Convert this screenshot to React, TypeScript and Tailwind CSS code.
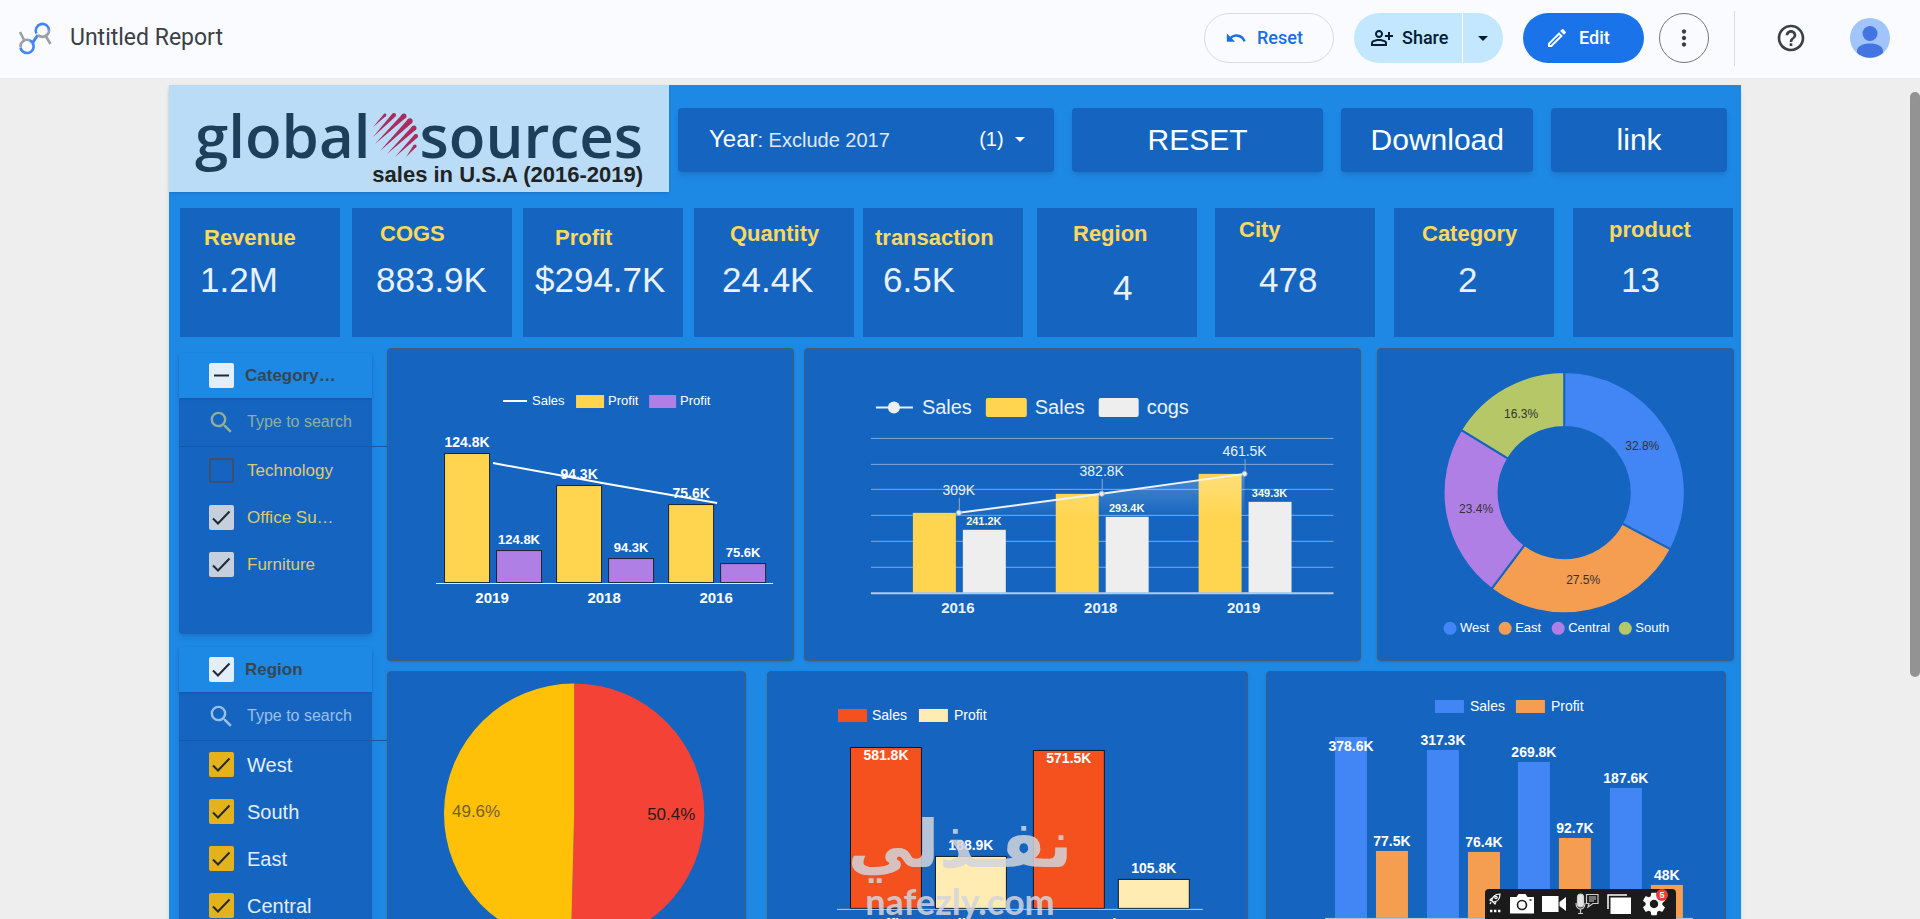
import { useState } from "react";
import type { ReactNode } from "react";
import {
  MdArrowDropDown,
  MdHelpOutline,
  MdMoreVert,
  MdOutlineModeEdit,
  MdOutlinePersonAddAlt,
  MdPhotoCamera,
  MdSearch,
  MdSettings,
  MdUndo,
  MdVideocam,
} from "react-icons/md";

const INK = "#1565c0";

/* ---------- top bar ---------- */

function ReportMark() {
  return (
    <svg viewBox="0 0 34 34" className="h-[34px] w-[34px]" fill="none" strokeWidth="2.6" aria-hidden="true">
      <path d="M2 11l4 8M28 15.500l4.500 7.500" stroke="#9aa0a6" />
      <path d="M14.800 21.500l5-7.500" stroke="#4285f4" strokeWidth="3" />
      <path d="M18.500 12.500a6.600 6.600 0 1 1 12.500-3" stroke="#4285f4" />
      <path d="M31 8.500a6.600 6.600 0 0 1-11 5.500" stroke="#9aa0a6" />
      <path d="M2.500 26a6.600 6.600 0 0 1 9.500-6.500" stroke="#9aa0a6" />
      <path d="M12 19.500a6.600 6.600 0 1 1-9.500 7" stroke="#4285f4" />
    </svg>
  );
}

function Avatar() {
  return (
    <svg viewBox="0 0 40 40" className="h-10 w-10" aria-hidden="true">
      <clipPath id="avatar-clip">
        <circle cx="20" cy="20" r="20" />
      </clipPath>
      <g clipPath="url(#avatar-clip)">
        <rect width="40" height="40" fill="#a1c5fb" />
        <circle cx="20" cy="15.500" r="7.500" fill="#4374e0" />
        <path d="M7 33c0-5 6-7.500 13-7.500S33 28 33 33v2a20 20 0 0 1-26 0z" fill="#4374e0" />
      </g>
    </svg>
  );
}

function TopBar() {
  return (
    <header className="flex h-[79px] shrink-0 items-start justify-between border-b border-[#e8eaed] bg-[#f9fbff] pr-[30px] pl-[18px] font-[Roboto,sans-serif]">
      <div className="flex h-[76px] items-center gap-[18px]">
        <ReportMark />
        <h1 className="text-[23px] leading-7 text-[#3c4043]">Untitled Report</h1>
      </div>
      <div className="flex h-[76px] items-center text-lg font-medium">
        <button className="flex h-[50px] w-[130px] items-center gap-2.5 rounded-full border border-[#dadce0] pl-5 text-[#1a6fe0]">
          <MdUndo size={22} />
          Reset
        </button>
        <div className="ml-5 flex h-[50px] w-[149px] overflow-hidden rounded-full bg-[#c2e7ff] text-[#001d35]">
          <button className="flex flex-1 items-center gap-2 border-r border-white pl-4">
            <MdOutlinePersonAddAlt size={24} />
            Share
          </button>
          <button aria-label="More sharing options" className="flex w-10 items-center justify-center">
            <MdArrowDropDown size={24} />
          </button>
        </div>
        <button className="ml-5 flex h-[50px] w-[121px] items-center gap-2.5 rounded-full bg-[#1a73e8] pl-[22px] text-white">
          <MdOutlineModeEdit size={24} />
          Edit
        </button>
        <button
          aria-label="More options"
          className="ml-[15px] flex h-[50px] w-[50px] items-center justify-center rounded-full border border-[#747775] text-[#3c4043]"
        >
          <MdMoreVert size={26} />
        </button>
        <span className="ml-[25px] h-[55px] w-px bg-[#dadce0]" />
        <button aria-label="Help" className="ml-10 text-[#3c4043]">
          <MdHelpOutline size={32} />
        </button>
        <button aria-label="Account" className="ml-[43px]">
          <Avatar />
        </button>
      </div>
    </header>
  );
}

/* ---------- brand banner and controls ---------- */

const GLOBE_STRIPES = [
  [12, 3, 0, 15, 1.4],
  [21, 3, 0, 25, 2.1],
  [31, 4, 2, 32, 2.5],
  [37, 9, 7, 39, 2.7],
  [41, 16, 14, 42, 2.5],
  [43, 24, 22, 45, 2.1],
  [42, 34, 33, 45, 1.6],
];

function Globe() {
  return (
    <svg viewBox="-2 -1 48 48" className="-mx-1 h-12 w-12" fill="#ac2a5c" aria-hidden="true">
      {GLOBE_STRIPES.map(([x, y, tx, ty, r]) => {
        const len = Math.hypot(tx - x, ty - y);
        const nx = (-(ty - y) / len) * r;
        const ny = ((tx - x) / len) * r;
        return (
          <g key={x + "-" + y}>
            <circle cx={x} cy={y} r={r} />
            <path d={`M${x + nx} ${y + ny}L${tx} ${ty}L${x - nx} ${y - ny}z`} />
          </g>
        );
      })}
    </svg>
  );
}

function Banner() {
  return (
    <div className="h-[107px] w-[500px] shrink-0 bg-[#bbdcf6] pt-[22px] pr-[26px] pl-[26px] shadow">
      <div className="flex items-center justify-between font-['Open_Sans',sans-serif] text-[60px] leading-[56px] font-semibold text-[#1d3f5c]">
        <span>global</span>
        <Globe />
        <span>sources</span>
      </div>
      <p className="text-right text-[22px] leading-6 font-bold text-[#1f2326]">sales in U.S.A (2016-2019)</p>
    </div>
  );
}

function ControlButton({ children }: { children: ReactNode }) {
  return (
    <button className="flex h-16 items-center justify-center rounded bg-[#1565c0] pb-0.5 text-[30px] text-white shadow-md">
      {children}
    </button>
  );
}

function Controls() {
  return (
    <div className="grid flex-1 grid-cols-[376fr_252fr_192fr_176fr] gap-[18px] pt-[23px] pr-[14px] pl-[9px]">
      <button className="flex h-16 items-center justify-between rounded bg-[#1565c0] pr-[22px] pb-0.5 pl-[31px] text-xl text-[#dfe9f5] shadow-md">
        <span>
          <span className="text-2xl text-white">Year</span>: Exclude 2017
        </span>
        <span className="flex items-center gap-1 text-white">
          (1)
          <MdArrowDropDown size={24} />
        </span>
      </button>
      <ControlButton>RESET</ControlButton>
      <ControlButton>Download</ControlButton>
      <ControlButton>link</ControlButton>
    </div>
  );
}

/* ---------- scorecards ---------- */

const SCORECARDS = [
  { title: "Revenue", value: "1.2M", titleClass: "pl-6 pt-4", valueClass: "pl-5" },
  { title: "COGS", value: "883.9K", titleClass: "pl-7 pt-3", valueClass: "pl-6" },
  { title: "Profit", value: "$294.7K", titleClass: "pl-8 pt-4", valueClass: "pl-3" },
  { title: "Quantity", value: "24.4K", titleClass: "pl-9 pt-3", valueClass: "pl-7" },
  { title: "transaction", value: "6.5K", titleClass: "pl-3 pt-4", valueClass: "pl-5" },
  { title: "Region", value: "4", titleClass: "pl-9 pt-3", valueClass: "pl-[76px] pt-2" },
  { title: "City", value: "478", titleClass: "pl-6 pt-2", valueClass: "pl-11" },
  { title: "Category", value: "2", titleClass: "pl-7 pt-3", valueClass: "pl-16" },
  { title: "product", value: "13", titleClass: "pl-9 pt-2", valueClass: "pl-12" },
];

function Scorecards() {
  return (
    <div className="mt-4 grid grid-cols-[172fr_171fr_171fr_169fr_174fr_178fr_179fr_179fr_160fr] pr-2 pl-[11px]">
      {SCORECARDS.map((card) => (
        <section key={card.title} className="h-[129px] w-40 bg-[#1565c0]">
          <h2 className={"h-[52px] text-[22px] leading-[27px] font-bold text-[#fdd85d] " + card.titleClass}>{card.title}</h2>
          <p className={"text-[35px] leading-10 text-[#e8f1fc] " + card.valueClass}>{card.value}</p>
        </section>
      ))}
    </div>
  );
}

/* ---------- filter lists ---------- */

type BoxTone = "head" | "silver" | "gold";

const BOX_TONES: Record<BoxTone, string> = {
  head: "bg-[#e3eef8]",
  silver: "bg-[#c5cfde]",
  gold: "bg-[#e4b31c]",
};

function Tick({
  label,
  tone,
  state,
  labelClass,
}: {
  label: string;
  tone: BoxTone;
  state: "on" | "off" | "mixed";
  labelClass: string;
}) {
  const [mark, setMark] = useState(state);
  return (
    <label className={"flex items-center " + labelClass}>
      <span className="relative block h-[25px] w-[25px] shrink-0">
        <input
          type="checkbox"
          checked={mark !== "off"}
          onChange={() => setMark(mark === "off" ? "on" : "off")}
          className={
            "block h-[25px] w-[25px] appearance-none rounded-xs " +
            (mark === "off" ? "border-2 border-[#3f5068]" : BOX_TONES[tone])
          }
        />
        {mark !== "off" && (
          <svg viewBox="0 0 25 25" className="pointer-events-none absolute inset-0" fill="none" stroke="#1f2a33" strokeWidth="2">
            <path d={mark === "on" ? "M4 13.500l5 5L20.500 6.500" : "M5 12.500h15"} />
          </svg>
        )}
      </span>
      {label}
    </label>
  );
}

function FilterList({
  title,
  titleState,
  items,
  tone,
  searchClass,
  itemClass,
  panelClass,
}: {
  title: string;
  titleState: "on" | "mixed";
  items: { label: string; state: "on" | "off" }[];
  tone: BoxTone;
  searchClass: string;
  itemClass: string;
  panelClass: string;
}) {
  return (
    <section className={"rounded bg-[#1565c0] shadow-md " + panelClass}>
      <div className="h-[45px] bg-[#1e88e5] shadow-sm">
        <Tick label={title} tone="head" state={titleState} labelClass="h-[45px] gap-[11px] pl-[30px] text-[17px] font-bold text-[#37474f]" />
      </div>
      <div className={"-mr-[15px] flex h-[49px] items-center gap-[11px] border-b border-[#1558a8] pl-7 " + searchClass}>
        <MdSearch size={29} className="shrink-0" />
        <input
          type="text"
          aria-label={"Search " + title}
          placeholder="Type to search"
          className="w-28 min-w-0 bg-transparent text-base outline-none placeholder:text-current placeholder:opacity-100"
        />
      </div>
      <ul>
        {items.map((item) => (
          <li key={item.label}>
            <Tick label={item.label} tone={tone} state={item.state} labelClass={"h-[47px] gap-[13px] pl-[30px] " + itemClass} />
          </li>
        ))}
      </ul>
    </section>
  );
}

/* ---------- chart helpers ---------- */

type Align = "start" | "middle";

function T({
  x,
  y,
  size,
  bold,
  fill = "#ffffff",
  align = "middle",
  children,
}: {
  x: number;
  y: number;
  size: number;
  bold?: boolean;
  fill?: string;
  align?: Align;
  children: string;
}) {
  return (
    <text x={x} y={y} fontSize={size} fontWeight={bold ? 700 : 400} fill={fill} textAnchor={align}>
      {children}
    </text>
  );
}

function ChartCard({ title, box, className, children }: { title: string; box: string; className: string; children: ReactNode }) {
  return (
    <figure className={"rounded border border-[#3f5d7c] bg-[#1565c0] shadow-sm " + className}>
      <svg viewBox={box} className="block w-full" role="img" aria-label={title}>
        {children}
      </svg>
    </figure>
  );
}

function slice(cx: number, cy: number, r: number, inner: number, from: number, to: number) {
  const point = (radius: number, share: number) => {
    const a = share * 2 * Math.PI;
    return `${(cx + radius * Math.sin(a)).toFixed(2)} ${(cy - radius * Math.cos(a)).toFixed(2)}`;
  };
  const large = to - from > 0.5 ? 1 : 0;
  return `M${point(r, from)}A${r} ${r} 0 ${large} 1 ${point(r, to)}L${point(inner, to)}A${inner} ${inner} 0 ${large} 0 ${point(inner, from)}z`;
}

/* ---------- charts (all share the canvas coordinate space) ---------- */

const PROFIT_BY_YEAR = [
  { year: "2019", label: "124.8K", x: 444, top: 453, labelY: 447, smallTop: 550, smallY: 544 },
  { year: "2018", label: "94.3K", x: 556, top: 485, labelY: 479, smallTop: 558, smallY: 552 },
  { year: "2016", label: "75.6K", x: 668, top: 504, labelY: 498, smallTop: 563, smallY: 557 },
];

function ProfitByYear() {
  return (
    <ChartCard title="Profit by year" box="388 349 405 311" className="flex-[407]">
      <path d="M503 401h24" stroke="#fff" strokeWidth="2" />
      <T x={532} y={405} size={13} align="start">Sales</T>
      <rect x="576" y="395" width="28" height="13" fill="#ffd54f" />
      <T x={608} y={405} size={13} align="start">Profit</T>
      <rect x="649" y="395" width="27" height="13" fill="#af7fe6" />
      <T x={680} y={405} size={13} align="start">Profit</T>
      {PROFIT_BY_YEAR.map((d) => (
        <g key={d.year}>
          <rect x={d.x + 0.5} y={d.top + 0.5} width="45" height={582 - d.top} fill="#ffd54f" stroke="#1b2430" />
          <rect x={d.x + 52.5} y={d.smallTop + 0.5} width="45" height={582 - d.smallTop} fill="#af7fe6" stroke="#1b2430" />
          <T x={d.x + 23} y={d.labelY} size={14} bold>{d.label}</T>
          <T x={d.x + 75} y={d.smallY} size={13} bold>{d.label}</T>
          <T x={d.x + 48} y={603} size={15} bold>{d.year}</T>
        </g>
      ))}
      <path d="M436 583.500h337" stroke="#dbe7f5" />
      <path d="M493 463l112 20.500L717 503" stroke="#fff" strokeWidth="2" fill="none" />
    </ChartCard>
  );
}

const SALES_COGS = [
  { year: "2016", sales: "309K", cogs: "241.2K", x: 913, top: 513, labelY: 495, cogsTop: 530, cogsY: 525 },
  { year: "2018", sales: "382.8K", cogs: "293.4K", x: 1056, top: 494, labelY: 476, cogsTop: 517, cogsY: 512 },
  { year: "2019", sales: "461.5K", cogs: "349.3K", x: 1199, top: 474, labelY: 456, cogsTop: 502, cogsY: 497 },
];

function SalesAndCogs() {
  return (
    <ChartCard title="Sales and cogs by year" box="805 349 555 311" className="ml-2.5 flex-[557]">
      <defs>
        <linearGradient id="area-fade" gradientUnits="userSpaceOnUse" x1="0" y1="473" x2="0" y2="518">
          <stop offset="0" stopColor="#fff" stopOpacity="0.25" />
          <stop offset="1" stopColor="#fff" stopOpacity="0" />
        </linearGradient>
      </defs>
      <path d="M876 407.500h37" stroke="#eee" strokeWidth="2" />
      <circle cx="894" cy="407.500" r="6" fill="#eee" />
      <T x={922} y={414} size={20} fill="#eaf2fb" align="start">Sales</T>
      <rect x="986" y="398" width="41" height="19" rx="2" fill="#ffd54f" />
      <T x={1035} y={414} size={20} fill="#eaf2fb" align="start">Sales</T>
      <rect x="1099" y="398" width="40" height="19" rx="2" fill="#eeeeee" />
      <T x={1147} y={414} size={20} fill="#eaf2fb" align="start">cogs</T>
      {[438.5, 464.5, 489.5, 515.5, 541.5, 567.5].map((y) => (
        <path key={y} d={`M871 ${y}h463`} stroke="#7fa9dc" />
      ))}
      {SALES_COGS.map((d) => (
        <g key={d.year}>
          <rect x={d.x} y={d.top} width="43" height={593 - d.top} fill="#ffd54f" />
          <rect x={d.x + 50} y={d.cogsTop} width="43" height={593 - d.cogsTop} fill="#eeeeee" />
          <T x={d.x + 71} y={d.cogsY} size={11} bold fill="#f4fbe0">{d.cogs}</T>
          <T x={d.x + 45} y={613} size={15} bold fill="#eaf2fb">{d.year}</T>
        </g>
      ))}
      <path d="M871 593.500h463" stroke="#b4cbe8" strokeWidth="2" />
      <path d="M959 513L1102 494L1245 474V518H959z" fill="url(#area-fade)" />
      <path d="M959 513L1102 494L1245 474" stroke="#eef3f8" strokeWidth="2" fill="none" />
      {SALES_COGS.map((d) => (
        <g key={d.year}>
          <path d={`M${d.x + 46.5} ${d.labelY + 3}V${d.top}`} stroke="#8aa7cc" />
          <circle cx={d.x + 46} cy={d.top} r="2.500" fill="#eee" stroke="#9fb4cc" />
          <T x={d.x + 46} y={d.labelY} size={14} fill="#eaf2fb">{d.sales}</T>
        </g>
      ))}
    </ChartCard>
  );
}

const REGION_SHARE = [
  { name: "West", from: 0, to: 0.328, fill: "#4285f4", label: "32.8%", lx: 1642, ly: 450, dot: 1450 },
  { name: "East", from: 0.328, to: 0.603, fill: "#f59e52", label: "27.5%", lx: 1583, ly: 584, dot: 1505 },
  { name: "Central", from: 0.603, to: 0.837, fill: "#af7fe6", label: "23.4%", lx: 1476, ly: 513, dot: 1558 },
  { name: "South", from: 0.837, to: 1, fill: "#b5c766", label: "16.3%", lx: 1521, ly: 418, dot: 1625 },
];

function RegionShare() {
  return (
    <ChartCard title="Share by region" box="1378 349 355 311" className="ml-4 flex-[357]">
      {REGION_SHARE.map((d) => (
        <g key={d.name}>
          <path d={slice(1564, 492.5, 120.5, 65.5, d.from, d.to)} fill={d.fill} stroke={INK} strokeWidth="2" />
          <T x={d.lx} y={d.ly} size={12} fill="#333333">{d.label}</T>
          <circle cx={d.dot} cy="628" r="6.500" fill={d.fill} />
          <T x={d.dot + 10} y={632} size={13} align="start">{d.name}</T>
        </g>
      ))}
    </ChartCard>
  );
}

function CategoryShare() {
  return (
    <ChartCard title="Share by category" box="388 672 357 311" className="flex-[359]">
      <path d={slice(574, 813.5, 130, 0, 0, 0.504)} fill="#f44336" />
      <path d={slice(574, 813.5, 130, 0, 0.504, 1)} fill="#ffc107" />
      <T x={476} y={817} size={17} fill="#75602a">49.6%</T>
      <T x={671} y={820} size={17} fill="#2b1b1a">50.4%</T>
    </ChartCard>
  );
}

const BY_CATEGORY = [
  { x: 850, top: 747, label: "581.8K", labelY: 760, fill: "#f4511e" },
  { x: 935, top: 856, label: "188.9K", labelY: 850, fill: "#ffecb3" },
  { x: 1033, top: 750, label: "571.5K", labelY: 763, fill: "#f4511e" },
  { x: 1118, top: 879, label: "105.8K", labelY: 873, fill: "#ffecb3" },
];

function SalesByCategory() {
  return (
    <ChartCard title="Sales and profit by category" box="768 672 479 311" className="ml-[21px] flex-[481]">
      <rect x="838" y="709" width="29" height="13" fill="#f4511e" />
      <T x={872} y={720} size={14} align="start">Sales</T>
      <rect x="919" y="709" width="29" height="13" fill="#ffecb3" />
      <T x={954} y={720} size={14} align="start">Profit</T>
      {BY_CATEGORY.map((d) => (
        <g key={d.label}>
          <rect x={d.x + 0.5} y={d.top + 0.5} width="71" height={908 - d.top} fill={d.fill} stroke="#101820" />
          <T x={d.x + 36} y={d.labelY} size={14} bold>{d.label}</T>
        </g>
      ))}
      <path d="M837 909.500h366" stroke="#b4cbe8" />
      <T x={928} y={929} size={15} bold>Office Supplies</T>
      <T x={1112} y={929} size={15} bold>Furniture</T>
    </ChartCard>
  );
}

const BY_REGION = [
  { x: 1335, top: 737, sales: "378.6K", salesY: 751, profitTop: 851, profit: "77.5K" },
  { x: 1427, top: 750, sales: "317.3K", salesY: 745, profitTop: 852, profit: "76.4K" },
  { x: 1518, top: 762, sales: "269.8K", salesY: 757, profitTop: 838, profit: "92.7K" },
  { x: 1610, top: 788, sales: "187.6K", salesY: 783, profitTop: 885, profit: "48K" },
];

function SalesByRegion() {
  return (
    <ChartCard title="Sales and profit by region" box="1267 672 458 311" className="ml-[18px] flex-[460]">
      <rect x="1435" y="700" width="29" height="13" fill="#4285f4" />
      <T x={1470} y={711} size={14} align="start">Sales</T>
      <rect x="1516" y="700" width="29" height="13" fill="#f59e52" />
      <T x={1551} y={711} size={14} align="start">Profit</T>
      {BY_REGION.map((d) => (
        <g key={d.sales}>
          <rect x={d.x} y={d.top} width="32" height={918 - d.top} fill="#4285f4" />
          <rect x={d.x + 41} y={d.profitTop} width="32" height={918 - d.profitTop} fill="#f59e52" />
          <T x={d.x + 16} y={d.salesY} size={14} bold>{d.sales}</T>
          <T x={d.x + 57} y={d.profitTop - 5} size={14} bold>{d.profit}</T>
        </g>
      ))}
      <path d="M1325 918.500h368" stroke="#b4cbe8" />
    </ChartCard>
  );
}

/* ---------- floating overlays ---------- */

function Watermark() {
  return (
    <div className="pointer-events-none absolute bottom-0 left-[853px] flex w-[214px] flex-col items-center text-[#d3d5dc] opacity-85">
      <span dir="rtl" className="font-['DejaVu_Sans',sans-serif] text-[66px] leading-[76px] font-bold">
        نفـذلي
      </span>
      <span className="font-[Lato,sans-serif] text-[36px] leading-[36px] font-bold">nafezly.com</span>
    </div>
  );
}

function RecorderBar() {
  return (
    <div className="absolute bottom-0 left-[1485px] flex h-[30px] w-[191px] items-center justify-between rounded-t bg-[#1b1b1b] pr-2 pl-1 text-white">
      <button aria-label="Launcher">
        <svg viewBox="0 0 12 24" className="h-6 w-3" fill="none" stroke="#fff" strokeWidth="1.200">
          <path d="M3 9c0-4 3-7 8-7 0 5-3 8-7 8zM3 6L1 8l2 1M7 10l-1 2-2-2M2 10l-1 2" />
          <circle cx="7" cy="5.500" r="1.200" />
          <path d="M1 19h2.400M5 19h2.400M9 19h2.400" strokeWidth="2.400" />
        </svg>
      </button>
      <button aria-label="Screenshot">
        <svg viewBox="0 0 24 20" className="h-5 w-6">
          <path d="M0 3h6.500l2-3h7l2 3H24v16.500H0z" fill="#fff" />
          <circle cx="12" cy="11" r="4.500" fill="none" stroke="#1b1b1b" strokeWidth="1.600" />
          <path d="M19.500 6h2" stroke="#1b1b1b" strokeWidth="1.500" />
        </svg>
      </button>
      <button aria-label="Record video">
        <svg viewBox="0 0 24 16" className="h-4 w-6" fill="#fff">
          <path d="M0 0h16.500v16H0zM17.500 6L24 1v14l-6.500-5z" />
        </svg>
      </button>
      <button aria-label="Record voice">
        <svg viewBox="0 0 24 24" className="h-6 w-6" fill="none" stroke="#cfcfcf" strokeWidth="1.200">
          <rect x="2.500" y="2" width="6" height="13" rx="3" fill="#e6e6e6" />
          <path d="M1 11c0 8 9 8 9 0M5.500 17v4M3 21.500h5" />
          <path d="M11.500 2.500h11.500v9h-5l-5 3.500 1-3.500h-2.500zM14 5h7M14 7h7M14 9h5" />
        </svg>
      </button>
      <button aria-label="Windows">
        <svg viewBox="0 0 24 24" className="h-6 w-6">
          <path d="M1 17V3h19" fill="none" stroke="#fff" strokeWidth="1.500" />
          <rect x="3.500" y="5.500" width="20.500" height="16.500" fill="#fff" />
        </svg>
      </button>
      <button aria-label="Settings" className="relative">
        <MdSettings size={28} />
        <span className="absolute -top-px right-0 flex h-3 w-3 items-center justify-center rounded-full bg-[#f03a37] text-[9px] leading-none font-bold">
          5
        </span>
      </button>
    </div>
  );
}

/* ---------- page ---------- */

export default function App() {
  return (
    <div className="relative flex h-screen flex-col overflow-hidden bg-[#eeeeee] font-['Liberation_Sans',Arial,sans-serif]">
      <TopBar />
      <div className="flex min-h-0 flex-1">
        <main className="min-w-0 flex-1 overflow-hidden px-[169px] pt-1.5">
          <div className="bg-[#1e88e5] pb-6 shadow-md">
            <div className="flex">
              <Banner />
              <Controls />
            </div>
            <Scorecards />
            <div className="mt-[11px] flex pl-2.5">
              <aside className="mt-[5px] flex w-[193px] shrink-0 flex-col gap-[13px]">
                <FilterList
                  title="Category…"
                  titleState="mixed"
                  tone="silver"
                  panelClass="h-[281px]"
                  searchClass="text-[#93ae98]"
                  itemClass="text-[17px] text-[#dccb6c]"
                  items={[
                    { label: "Technology", state: "off" },
                    { label: "Office Su…", state: "on" },
                    { label: "Furniture", state: "on" },
                  ]}
                />
                <FilterList
                  title="Region"
                  titleState="on"
                  tone="gold"
                  panelClass="h-[300px]"
                  searchClass="text-[#9cbfe8]"
                  itemClass="text-xl text-[#e3eefa]"
                  items={[
                    { label: "West", state: "on" },
                    { label: "South", state: "on" },
                    { label: "East", state: "on" },
                    { label: "Central", state: "on" },
                  ]}
                />
              </aside>
              <div className="ml-[15px] flex min-w-0 flex-1 flex-col gap-2.5">
                <div className="flex items-start pr-[7px]">
                  <ProfitByYear />
                  <SalesAndCogs />
                  <RegionShare />
                </div>
                <div className="flex items-start pr-[15px]">
                  <CategoryShare />
                  <SalesByCategory />
                  <SalesByRegion />
                </div>
              </div>
            </div>
          </div>
        </main>
        <div className="w-2.5 pt-[13px]">
          <div className="h-[585px] rounded-full bg-[#939393]" />
        </div>
      </div>
      <Watermark />
      <RecorderBar />
    </div>
  );
}
